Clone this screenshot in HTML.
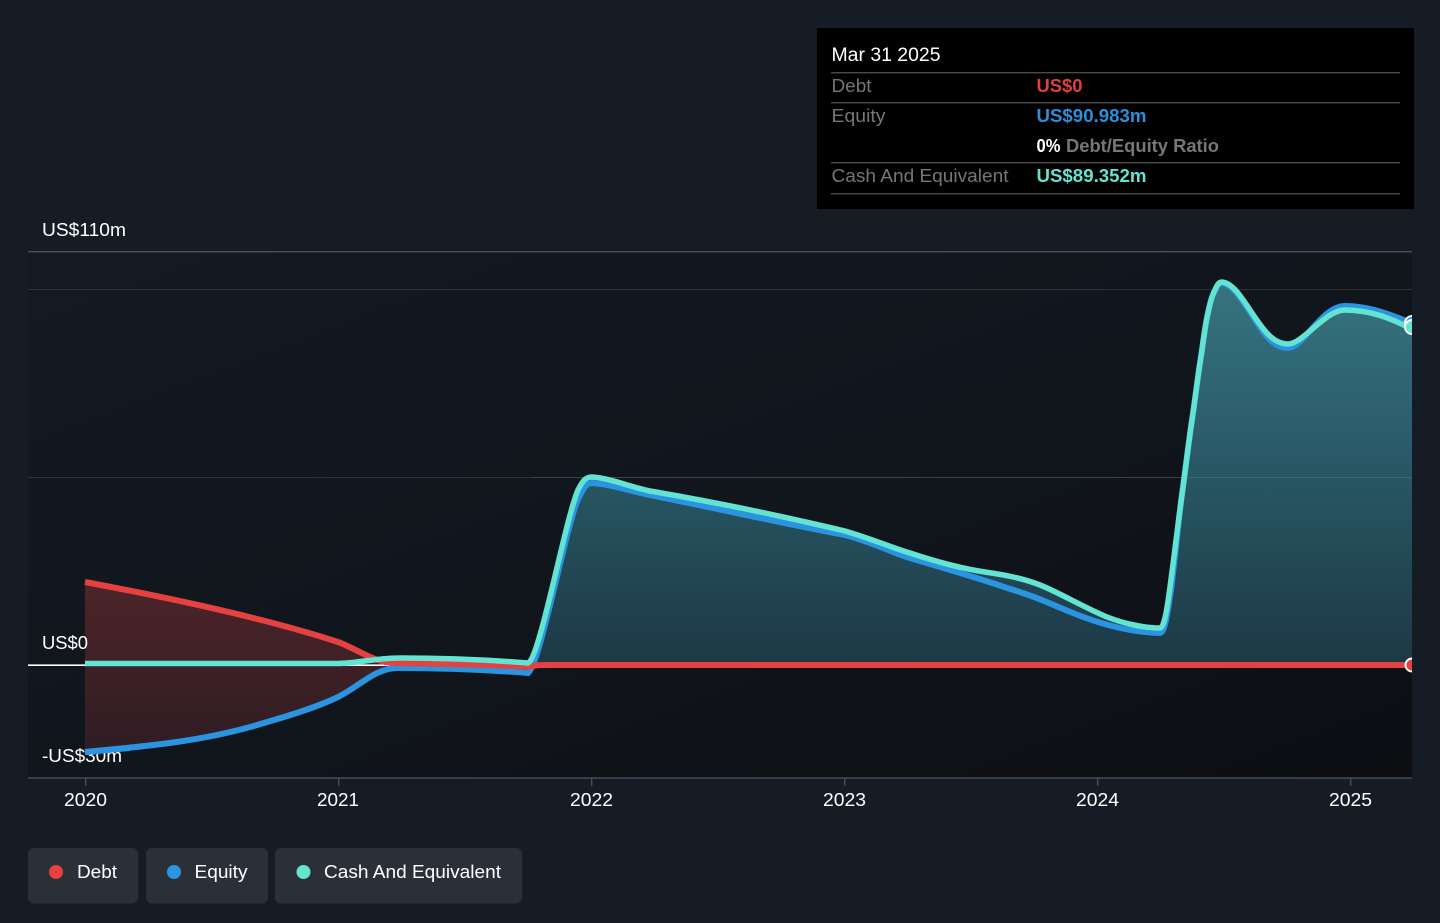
<!DOCTYPE html>
<html><head><meta charset="utf-8"><title>Debt and Equity</title>
<style>
html,body{margin:0;padding:0;background:#151c25;width:1440px;height:923px;overflow:hidden}
svg{display:block}
text{font-family:"Liberation Sans",sans-serif;font-size:18px}
</style></head>
<body>
<svg width="1440" height="923" viewBox="0 0 1440 923" xmlns="http://www.w3.org/2000/svg">
<defs>
<linearGradient id="bg" x1="0" y1="0" x2="1" y2="1">
<stop offset="0" stop-color="#131a23"/><stop offset="0.5" stop-color="#11161d"/><stop offset="1" stop-color="#0c0e12"/>
</linearGradient>
<linearGradient id="teal" gradientUnits="userSpaceOnUse" x1="0" y1="282" x2="0" y2="665">
<stop offset="0" stop-color="#367480"/><stop offset="0.5" stop-color="#285764"/><stop offset="1" stop-color="#1d3845"/>
</linearGradient>
<linearGradient id="red" gradientUnits="userSpaceOnUse" x1="0" y1="582" x2="0" y2="752">
<stop offset="0" stop-color="#4d2429"/><stop offset="1" stop-color="#2e1d23"/>
</linearGradient>
<clipPath id="plot"><rect x="28" y="252" width="1384" height="526"/></clipPath>
</defs>
<rect width="1440" height="923" fill="#151c25"/>
<rect x="28" y="252" width="1384" height="526" fill="url(#bg)"/>

<rect x="28" y="251" width="1384" height="1.4" fill="#4a4f56"/>
<rect x="28" y="289" width="1384" height="1" fill="#2d3138"/>
<rect x="28" y="477" width="1384" height="1" fill="#2d3138"/>
<rect x="28" y="777.3" width="1384" height="1.4" fill="#4a4f56"/>
<g fill="#4a4f56">
<rect x="85" y="778" width="1.4" height="8"/><rect x="338" y="778" width="1.4" height="8"/><rect x="591" y="778" width="1.4" height="8"/><rect x="844" y="778" width="1.4" height="8"/><rect x="1097" y="778" width="1.4" height="8"/><rect x="1350" y="778" width="1.4" height="8"/>
</g>

<g clip-path="url(#plot)">
<!-- debt/equity shaded area -->
<path d="M85,582 C170,598 265,618 338,642 C352,647 365,656 378,660 L392,668 C368,670 355,685 338,697 C265,733 170,745 85,752 Z" fill="url(#red)"/>
<!-- cash/equity shaded area -->
<path d="M533,665 C545,640 565,520 578,494 C583,484 586,478 592,477 C610,478 630,487 650,491 C720,503 790,518 845,531 C875,540 890,547 910,553 C940,563 965,569 985,572 C1005,575 1022,578 1040,585 C1060,593 1085,608 1107,617 C1125,624 1145,628 1160,628 C1164,628 1167,610 1170,587 C1175,550 1179,515 1183,487 C1186,465 1189,440 1192,420 C1195,400 1197,383 1200,363 C1203,345 1205,325 1208,313 C1210,303 1212,295 1215,290 C1217,285 1219,282 1222,282 C1232,283 1240,295 1250,310 C1262,328 1272,344 1288,344 C1303,344 1325,310 1345,310 C1370,310 1390,318 1412,329 L1412,665 Z" fill="url(#teal)"/>
<rect x="533" y="477" width="879" height="1" fill="#ffffff" fill-opacity="0.09"/>
<rect x="28" y="664.4" width="362" height="1.6" fill="#ffffff"/>
<!-- equity -->
<path d="M85,752 C150,746 200,741 250,727 C285,717 315,708 338,697 C360,686 375,668 398,668 C440,668 490,670 528,673 C540,665 565,530 578,499 C583,489 586,483 592,483 C610,484 630,491 650,495 C720,509 790,525 845,535 C875,543 890,552 910,558 C950,570 985,580 1007,588 C1035,596 1055,606 1073,613 C1095,622 1125,632 1160,633 C1165,633 1168,610 1171,590 C1176,550 1179,515 1183,487 C1186,465 1189,440 1192,420 C1195,400 1197,383 1200,363 C1203,345 1205,325 1208,313 C1210,303 1212,295 1215,291 C1217,286 1219,283 1222,283 C1232,284 1240,297 1250,312 C1262,331 1272,348 1288,348 C1303,348 1322,306 1345,306 C1370,306 1390,315 1412,323" fill="none" stroke="#2b94e0" stroke-width="6"/>
<!-- debt -->
<path d="M85,582 C170,598 265,618 338,642 C352,647 365,656 378,660 C385,662 388,663 395,663 C440,664 490,664 528,667 C535,665 540,665 550,665 L1412,665" fill="none" stroke="#e64141" stroke-width="6"/>
<!-- cash -->
<path d="M85,663.5 L338,663.5 C360,663 375,658 400,658 C440,658 490,660 528,663 C540,658 565,520 578,490 C583,480 586,477 592,477 C610,478 630,487 650,491 C720,503 790,518 845,531 C875,540 890,547 910,553 C940,563 965,569 985,572 C1005,575 1022,578 1040,585 C1060,593 1085,608 1107,617 C1125,624 1145,628 1160,628 C1164,628 1167,610 1170,587 C1175,550 1179,515 1183,487 C1186,465 1189,440 1192,420 C1195,400 1197,383 1200,363 C1203,345 1205,325 1208,313 C1210,303 1212,295 1215,290 C1217,285 1219,282 1222,282 C1232,283 1240,295 1250,310 C1262,328 1272,344 1288,344 C1303,344 1325,310 1345,310 C1370,310 1390,318 1412,329" fill="none" stroke="#63e3d2" stroke-width="5.500"/>
<!-- end markers -->
<circle cx="1412" cy="665" r="6.5" fill="#e64141" stroke="#fff" stroke-width="2"/>
<circle cx="1412" cy="323" r="7" fill="#2b94e0" stroke="#fff" stroke-width="2"/>
<circle cx="1412" cy="327" r="7" fill="#63e3d2" stroke="#fff" stroke-width="2"/>
</g>

<!-- y axis labels -->
<text x="42" y="236" fill="#fff" textLength="84" lengthAdjust="spacingAndGlyphs">US$110m</text>
<text x="42" y="649" fill="#fff" textLength="46" lengthAdjust="spacingAndGlyphs">US$0</text>
<text x="42" y="762" fill="#fff" textLength="80" lengthAdjust="spacingAndGlyphs">-US$30m</text>
<path d="M85,752 C100,751 115,749 130,748" fill="none" stroke="#2b94e0" stroke-width="6"/>

<!-- x axis labels -->
<g fill="#fff">
<text x="64" y="806" textLength="43" lengthAdjust="spacingAndGlyphs">2020</text>
<text x="317" y="806" textLength="42" lengthAdjust="spacingAndGlyphs">2021</text>
<text x="570" y="806" textLength="43" lengthAdjust="spacingAndGlyphs">2022</text>
<text x="823" y="806" textLength="43" lengthAdjust="spacingAndGlyphs">2023</text>
<text x="1076" y="806" textLength="43" lengthAdjust="spacingAndGlyphs">2024</text>
<text x="1329" y="806" textLength="43" lengthAdjust="spacingAndGlyphs">2025</text>
</g>

<!-- tooltip -->
<rect x="817" y="28" width="597" height="181" fill="#000"/>
<text x="831.5" y="61" fill="#fff" textLength="109" lengthAdjust="spacingAndGlyphs" style="font-size:19px">Mar 31 2025</text>
<g fill="#4a4a4a">
<rect x="831" y="72" width="569" height="1.4"/>
<rect x="831" y="102" width="569" height="1.4"/>
<rect x="831" y="162" width="569" height="1.4"/>
<rect x="831" y="193" width="569" height="1.4"/>
</g>
<text x="831.5" y="92" fill="#767676" textLength="40" lengthAdjust="spacingAndGlyphs">Debt</text>
<text x="831.5" y="122" fill="#767676" textLength="54" lengthAdjust="spacingAndGlyphs">Equity</text>
<text x="831.5" y="182" fill="#767676" textLength="177" lengthAdjust="spacingAndGlyphs">Cash And Equivalent</text>
<text x="1036.5" y="92" fill="#e04040" font-weight="bold" textLength="46" lengthAdjust="spacingAndGlyphs">US$0</text>
<text x="1036.5" y="122" fill="#2b8fd9" font-weight="bold" textLength="110" lengthAdjust="spacingAndGlyphs">US$90.983m</text>
<text x="1036.5" y="152" fill="#fff" font-weight="bold" textLength="24" lengthAdjust="spacingAndGlyphs">0%</text>
<text x="1066" y="152" fill="#767676" font-weight="bold" textLength="153" lengthAdjust="spacingAndGlyphs">Debt/Equity Ratio</text>
<text x="1036.5" y="182" fill="#63e3d2" font-weight="bold" textLength="110" lengthAdjust="spacingAndGlyphs">US$89.352m</text>

<!-- legend -->
<rect x="28" y="848" width="110" height="55.5" rx="6" fill="#2b3038"/>
<rect x="146" y="848" width="122" height="55.5" rx="6" fill="#2b3038"/>
<rect x="275" y="848" width="247" height="55.5" rx="6" fill="#2b3038"/>
<circle cx="56" cy="872" r="7" fill="#e64141"/>
<circle cx="174" cy="872" r="7" fill="#2b94e0"/>
<circle cx="303.500" cy="872" r="7" fill="#63e3d2"/>
<text x="77" y="878" fill="#fff" textLength="40" lengthAdjust="spacingAndGlyphs">Debt</text>
<text x="194.500" y="878" fill="#fff" textLength="53" lengthAdjust="spacingAndGlyphs">Equity</text>
<text x="324" y="878" fill="#fff" textLength="177" lengthAdjust="spacingAndGlyphs">Cash And Equivalent</text>
</svg>
</body></html>
